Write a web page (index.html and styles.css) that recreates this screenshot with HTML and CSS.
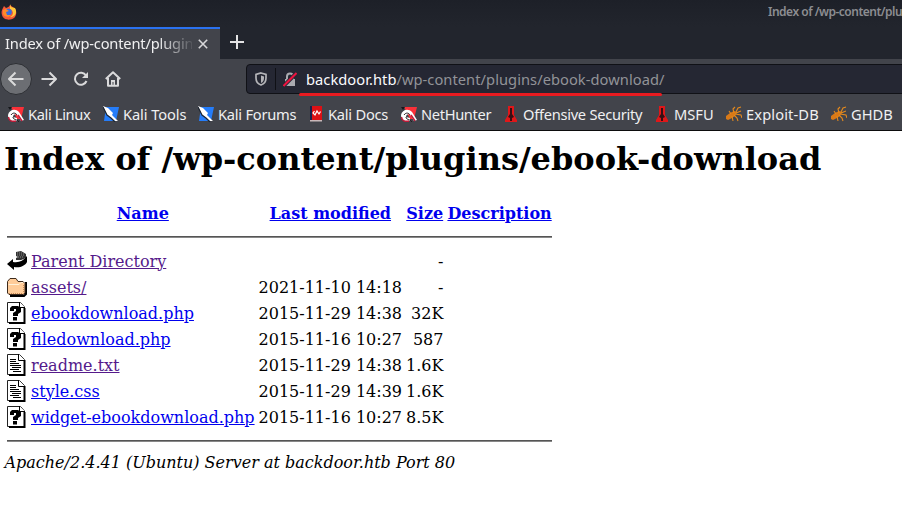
FILE: index.html
```html
<!DOCTYPE html>
<html lang="en">
<head>
<meta charset="utf-8">
<title>Index of /wp-content/plugins/ebook-download</title>
<link rel="stylesheet" href="styles.css">
</head>
<body>
<svg class="defs" aria-hidden="true">
  <symbol id="dragon" viewBox="0 0 16 16"><path d="M3 1H16L13 13H9Z" fill="#fa3038"/><path d="M0 1H4L2 4Z" fill="#16171b"/><path d="M0 9C1 4 7 2 11 6L16 14L13 15L10 10C8 7 5 8 5 11L9 12V15H4C1 14 0 12 0 9Z" fill="#fff"/><path d="M3 9C5 6 8 7 9 9M5 11C5 14 9 13 11 16" stroke="#25181d" stroke-width="1" fill="none"/><path d="M.5 11C1 15 4 16 8 15M10 9L14 15" stroke="#c11a38" stroke-width="1.5" fill="none"/></symbol>
  <symbol id="knife" viewBox="0 0 16 16"><path d="M3 1H16L13 15H1Z" fill="#257dfa"/><path d="M0 0L5 2L10 7L9 9L15 15L12 15L7 11L4 9Z" fill="#fff"/><path d="M0 1L4 9L8 12L12 16" stroke="#1c2632" stroke-width="1.2" fill="none"/></symbol>
  <symbol id="docs" viewBox="0 0 16 16"><path d="M2 0H14V14H2Z" fill="#dc1015"/><path d="M2 0H4V14H2Z" fill="#19204b"/><path d="M2 14H14V15.500H2Z" fill="#c9b8ba"/><path d="M6.500 5L5 7L7 9L9 5L11 8L12.500 5.500" fill="none" stroke="#fff" stroke-width="1.2"/></symbol>
  <symbol id="tower" viewBox="0 0 16 16"><path d="M5 0H11V9L14 14V16H2V14L5 9Z" fill="#df1719"/><path d="M7 2H9V8L11 11L9 12V15H7V12L5 11L7 8Z" fill="#351014"/></symbol>
  <symbol id="bug" viewBox="0 0 16 16"><path d="M0 10L4 7L8 5L11 6L9 10L6 12L2 14L0 13Z" fill="#d87917"/><path d="M8 7L7 3L9 1M10 6L12 2L15 1M10 7L15 5M9 8L15 9L16 12M8 9L11 12L12 15M6 10L7 15M5 8L3 5" fill="none" stroke="#e58a1d" stroke-width="1.1"/></symbol>
  <symbol id="unknown" viewBox="0 0 20 22"><path d="M.5.5H13.500L17.500 5V20.500H.5Z" fill="#fff" stroke="#222"/><path d="M17.500 6V21H2" fill="none" stroke="#000" stroke-width="2"/><path d="M12.500 0V5.500H18" fill="#fff" stroke="#000"/><path d="M3 9V6L5 4H11L14 6V10L11 12V14H6V11L9 9V7H7V9Z"/><path d="M6 15H10V18.500H6Z"/></symbol>
  <symbol id="text" viewBox="0 0 20 22"><path d="M.5.5H12.500L17.500 5.500V20.500H.5Z" fill="#fff" stroke="#222"/><path d="M17.500 6V21H2" fill="none" stroke="#000" stroke-width="2"/><path d="M11.500 0V6.500H18" fill="#fff" stroke="#000"/><path d="M3 5.500H9M3 7.500H9M3 9.500H12M3 11.500H14M5 13.500H14M3 15.500H12M6 17.500H14" stroke="#000"/></symbol>
</svg>
<header class="browser">
  <div class="titlebar">
    <svg class="fox" viewBox="0 0 16 16"><path d="M2 4L3 2L5 4C7 3 8 3 9 1L13 4C16 6 16 11 13 14C9 17 2 16 1 11C0 8 1 6 2 4Z" fill="#f65a38"/><path d="M9 0L10 3L14 4C17 9 13 14 9 13C13 11 13 7 9 5Z" fill="#ffc739"/><circle cx="7.500" cy="8" r="3.300" fill="#386edd"/><path d="M2 6L5 5L8 7L5 8L6 11L10 11C8 14 3 13 2 10Z" fill="#ff8a29"/></svg>
    <span class="window-title">Index of /wp-content/plugins/ebook-download</span>
  </div>
  <div class="tabs">
    <div class="tab"><span class="tab-label">Index of /wp-content/plugins</span><svg class="close" viewBox="0 0 10 10"><path d="M.8.8L9.200 9.200M9.200.8L.8 9.200"/></svg></div>
    <svg class="plus" viewBox="0 0 14 14"><path d="M7 0V14M0 7H14"/></svg>
  </div>
  <div class="navbar">
    <div class="back"><svg class="nav-icon" viewBox="0 0 16 16"><path d="M15.500 8H1M7.500 1.500L1 8L7.500 14.500"/></svg></div>
    <svg class="nav-icon forward" viewBox="0 0 16 16"><path d="M.5 8H15M8.500 1.500L15 8L8.500 14.500"/></svg>
    <svg class="nav-icon reload" viewBox="0 0 16 16"><path d="M13 4.500A6 6 0 1 0 13.500 10"/><path d="M15 1V7H9Z" class="solid"/></svg>
    <svg class="nav-icon home" viewBox="0 0 16 16"><path d="M.8 8L8 1.200L15.200 8M3 7V14.700H13V7"/><path d="M6 9H10V14H8.500V11H7.500V14H6Z" class="solid"/></svg>
    <div class="urlbar">
      <svg class="shield" viewBox="0 0 12 14"><path d="M6 1L11 2.500V6C11 10 9 12 6 13C3 12 1 10 1 6V2.500Z" fill="none" stroke="#b4b4b8" stroke-width="1.7"/><path d="M6 3.500L9 4.500V6C9 8.500 8 10 6 11Z" fill="#b4b4b8"/></svg>
      <span class="divider"></span>
      <svg class="lock" viewBox="0 0 14 15"><path d="M4 7V4.500A3 3 0 0 1 10 4.500V7" fill="none" stroke="#aaaab0" stroke-width="2"/><path d="M2 7H12V14H2Z" fill="#aaaab0"/><path d="M.5 14L13.500 1" stroke="#252733" stroke-width="4"/><path d="M.5 14L13.500 1" stroke="#ed123f" stroke-width="2"/></svg>
      <span class="url"><b>backdoor.htb</b>/wp-content/plugins/ebook-download/</span>
      <span class="mark"></span>
    </div>
  </div>
  <nav class="bookmarks">
    <a class="linux"><svg><use href="#dragon"/></svg>Kali Linux</a>
    <a class="tools"><svg><use href="#knife"/></svg>Kali Tools</a>
    <a class="forums"><svg><use href="#knife"/></svg>Kali Forums</a>
    <a class="docs"><svg><use href="#docs"/></svg>Kali Docs</a>
    <a class="hunter"><svg><use href="#dragon"/></svg>NetHunter</a>
    <a class="offsec"><svg><use href="#tower"/></svg>Offensive Security</a>
    <a class="msfu"><svg><use href="#tower"/></svg>MSFU</a>
    <a class="exploit"><svg><use href="#bug"/></svg>Exploit-DB</a>
    <a class="ghdb"><svg><use href="#bug"/></svg>GHDB</a>
  </nav>
</header>
<main>
  <h1>Index of /wp-content/plugins/ebook-download</h1>
  <table>
    <tr><th><span class="blank"></span></th><th><a href="#n">Name</a></th><th><a href="#m">Last modified</a></th><th><a href="#s">Size</a></th><th><a href="#d">Description</a></th></tr>
    <tr><th colspan="5"><hr></th></tr>
    <tr><td><svg class="file" viewBox="0 0 20 22"><path d="M9 2L14 1L19 4V8L14 10H9V8L11 7L9 6Z" fill="#333"/><path d="M10 3H18M10 5H18M11 7H17" stroke="#888" stroke-dasharray="1 1"/><path d="M0 14L6 9V12C12 13 16 11 20 6V12C18 16 13 18 7 17V20Z"/></svg></td><td><a class="seen" href="#p">Parent Directory</a></td><td></td><td class="size">-</td><td></td></tr>
    <tr><td><svg class="file" viewBox="0 0 20 22"><path d="M3 20H17L19 18V6" fill="none" stroke="#000" stroke-width="2"/><path d="M.5 5.500L3 2.500H9L11 5.500H16L18 7.500V17L16.500 18.500H2L.5 17Z" fill="#ffcc99" stroke="#3e2b1d"/><path d="M1.500 8.500H12L14 6.500H16" fill="none" stroke="#fff1d9"/><path d="M2 17.500H16.500V8" fill="none" stroke="#c98d59" stroke-dasharray="1 1"/></svg></td><td><a class="seen" href="#a">assets/</a></td><td>2021-11-10 14:18</td><td class="size">-</td><td></td></tr>
    <tr><td><svg class="file"><use href="#unknown"/></svg></td><td><a href="#e">ebookdownload.php</a></td><td>2015-11-29 14:38</td><td class="size">32K</td><td></td></tr>
    <tr><td><svg class="file"><use href="#unknown"/></svg></td><td><a href="#f">filedownload.php</a></td><td>2015-11-16 10:27</td><td class="size">587</td><td></td></tr>
    <tr><td><svg class="file"><use href="#text"/></svg></td><td><a class="seen" href="#r">readme.txt</a></td><td>2015-11-29 14:38</td><td class="size">1.6K</td><td></td></tr>
    <tr><td><svg class="file"><use href="#text"/></svg></td><td><a href="#c">style.css</a></td><td>2015-11-29 14:39</td><td class="size">1.6K</td><td></td></tr>
    <tr><td><svg class="file"><use href="#unknown"/></svg></td><td><a href="#w">widget-ebookdownload.php</a></td><td>2015-11-16 10:27</td><td class="size">8.5K</td><td></td></tr>
    <tr><th colspan="5"><hr></th></tr>
  </table>
  <address>Apache/2.4.41 (Ubuntu) Server at backdoor.htb Port 80</address>
</main>
</body>
</html>
```
FILE: styles.css
```css
* { box-sizing: border-box; }
html, body { margin: 0; height: 522px; overflow: hidden; background: #fff; }
body { font: 16px "DejaVu Serif", serif; color: #000; }
svg { display: block; flex: none; }
.defs { position: absolute; width: 0; height: 0; }
.browser { height: 131px; background: #42444b; border-bottom: 1px solid #0c0c0d; font: 14.67px/20px "Noto Sans", sans-serif; color: #f0f0f1; overflow: hidden; white-space: nowrap; }
.titlebar { height: 27px; display: flex; padding: 4px 0 0 1px; background: linear-gradient(#1d2028, #22252d); }
.fox { width: 16px; height: 16px; }
.window-title { margin-left: 751px; margin-top: -2px; font-size: 12px; font-weight: 600; color: #8c8d91; line-height: 20px; letter-spacing: -.5px; }
.tabs { height: 32px; display: flex; background: #22252d; }
.tab { width: 220px; background: #42444b; border-top: 2px solid #2b72f0; display: flex; align-items: center; padding-left: 5px; }
.tab-label { width: 187px; margin: -3px 2px 0 0; letter-spacing: -.17px; overflow: hidden; -webkit-mask-image: linear-gradient(90deg, #000 82%, transparent 102%); mask-image: linear-gradient(90deg, #000 82%, transparent 102%); }
.close { width: 10px; height: 10px; margin-left: 4px; stroke: #d7d7d9; stroke-width: 1.6; }
.plus { width: 14px; height: 14px; margin: 8px 0 0 10px; stroke: #e3e3e4; stroke-width: 2; }
.navbar { height: 40px; display: flex; align-items: center; }
.back { width: 32px; height: 32px; flex: none; border-radius: 50%; background: #6c6e73; border: 1px solid #2d2f34; display: flex; align-items: center; justify-content: center; }
.nav-icon { width: 16px; height: 16px; fill: none; stroke: #dadadb; stroke-width: 2; stroke-linejoin: round; }
.nav-icon .solid { fill: #dadadb; stroke: none; }
.forward { margin-left: 9px; }
.reload { margin-left: 16px; }
.home { margin-left: 16px; }
.urlbar { width: 670px; height: 30px; margin: 0 0 0 125px; position: relative; border: 1px solid #101116; border-radius: 4px; background: #252733; display: flex; align-items: center; flex: none; }
.shield { width: 12px; height: 14px; margin-left: 8px; }
.divider { width: 1px; height: 22px; margin-left: 8px; background: #0f1015; }
.lock { width: 14px; height: 15px; margin-left: 7px; }
.url { margin-left: 9px; color: #929398; letter-spacing: .05px; }
.url b { font-weight: 400; color: #fbfbfe; }
.mark { position: absolute; left: 52px; top: 28px; width: 363px; height: 3px; border-radius: 2px; background: #e91b20; }
.bookmarks { height: 31px; padding: 0 0 2px 8px; display: flex; align-items: center; }
.bookmarks a { display: flex; align-items: center; flex: none; color: #f0f0f1; }
.bookmarks svg { width: 16px; height: 16px; margin: 1px 4px 0 0; }
.linux { width: 95px; letter-spacing: -.36px; }
.tools { width: 95px; letter-spacing: -.1px; }
.forums { width: 110px; letter-spacing: -.25px; }
.docs { width: 93px; letter-spacing: -.24px; }
.hunter { width: 102px; letter-spacing: -.35px; }
.offsec { width: 151px; letter-spacing: -.28px; }
.msfu { width: 72px; }
.exploit { width: 105px; letter-spacing: .12px; }
main { padding: 9px 4px 0; }
h1 { font-size: 32px; line-height: 38px; margin: 0 0 21px; white-space: nowrap; }
table { border-spacing: 2px; line-height: 19px; }
td, th { padding: 1px; white-space: nowrap; }
.blank, .file { display: block; width: 20px; height: 22px; }
.size { text-align: right; }
hr { margin: 8px 0; height: 2px; border: 0; border-top: 1px solid #555; background: #888; }
main a { color: #0000ee; }
main a.seen { color: #551a8b; }
address { line-height: 19px; padding-left: .5px; }
```
